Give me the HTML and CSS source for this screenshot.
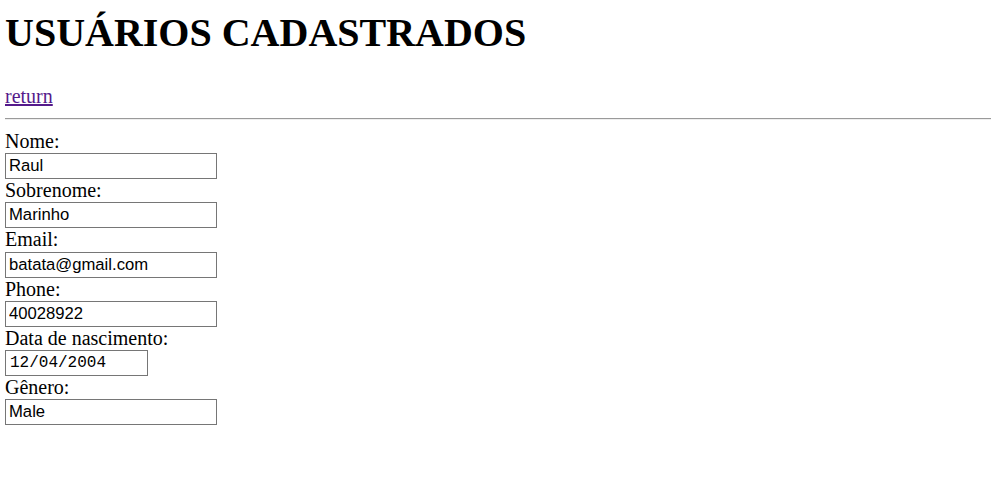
FILE: index.html
```html
<!DOCTYPE html>
<html>
<head>
<meta charset="utf-8">
<link rel="stylesheet" href="styles.css">
</head>
<body>
<h1 class="title">USUÁRIOS CADASTRADOS</h1>
<a class="back" href="#">return</a>
<hr class="sep">
<form class="form">
  <label class="lbl">Nome:</label>
  <input class="field" type="text" value="Raul">
  <label class="lbl">Sobrenome:</label>
  <input class="field" type="text" value="Marinho">
  <label class="lbl">Email:</label>
  <input class="field" type="text" value="batata@gmail.com">
  <label class="lbl">Phone:</label>
  <input class="field" type="text" value="40028922">
  <label class="lbl">Data de nascimento:</label>
  <input class="field date" type="text" value="12/04/2004">
  <label class="lbl">Gênero:</label>
  <input class="field" type="text" value="Male">
</form>
</body>
</html>
```

FILE: styles.css
```css
html, body {
  background: #fff;
}
body {
  margin: 0 0 0 5px;
  font-family: "Liberation Serif", "Times New Roman", serif;
  font-size: 20px;
  color: #000;
}
.title {
  font-size: 40px;
  font-weight: bold;
  line-height: 46px;
  margin: 10px 0 29px 0;
}
.back {
  display: block;
  width: max-content;
  line-height: 23px;
  color: #551a8b;
}
.sep {
  margin: 10px 0 10px 0;
  border: none;
  border-top: 1px solid #9a9a9a;
  border-bottom: 1px solid #eeeeee;
  height: 0;
}
.form {
  display: flex;
  flex-direction: column;
  align-items: flex-start;
}
.lbl {
  display: block;
  line-height: 23px;
  height: 23.2px;
}
.field {
  display: block;
  box-sizing: border-box;
  width: 212px;
  height: 26px;
  margin: 0;
  padding: 1px 3px;
  border: 1px solid #767676;
  border-radius: 0;
  font-family: "Liberation Sans", Arial, sans-serif;
  font-size: 16.67px;
  color: #000;
  background: #fff;
  outline: none;
}
.date {
  width: 143px;
  font-family: "Liberation Mono", "DejaVu Sans Mono", monospace;
  font-size: 16px;
  padding-left: 4px;
}
```
